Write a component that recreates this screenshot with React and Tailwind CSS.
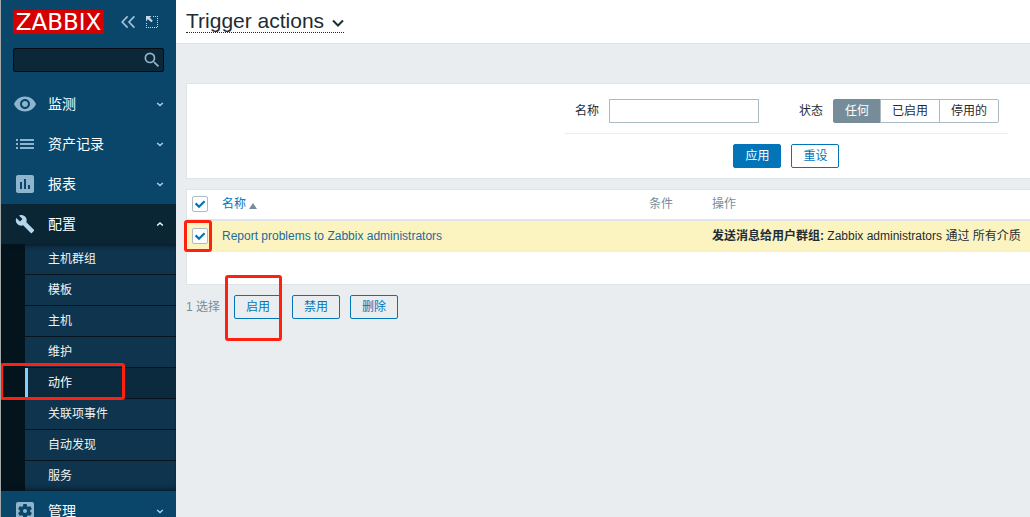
import { useState } from "react";
import {
  MdVisibility,
  MdList,
  MdAssessment,
  MdBuild,
  MdSettingsApplications,
  MdSearch,
} from "react-icons/md";

const TOP_SECTIONS = [
  { label: "监测", Icon: MdVisibility },
  { label: "资产记录", Icon: MdList },
  { label: "报表", Icon: MdAssessment },
];

const CONFIG_ITEMS = ["主机群组", "模板", "主机", "维护", "动作", "关联项事件", "自动发现", "服务"];

const STATUSES = ["任何", "已启用", "停用的"];

function Chevron({ up }) {
  return (
    <svg className="h-2 w-2" viewBox="0 0 8 8" fill="none" stroke="currentColor" strokeWidth="1.4">
      <path d={up ? "M1.2 5.5 4 2.9l2.8 2.6" : "M1.2 2.9 4 5.5l2.8-2.6"} />
    </svg>
  );
}

function Section({ label, Icon, open }) {
  return (
    <button
      type="button"
      aria-expanded={Boolean(open)}
      className={
        open
          ? "flex h-10 w-full items-center bg-[#0a2635] px-3 text-sm text-white"
          : "flex h-10 w-full items-center px-3 text-sm text-white"
      }
    >
      <span className="flex h-6 w-6 items-center justify-center">
        <Icon className={open ? "h-5 w-5 text-[#b5d7ee]" : "h-6 w-6 text-[#8fb5ce]"} />
      </span>
      <span className="ml-[11px]">{label}</span>
      <span className={open ? "ml-auto text-white" : "ml-auto text-[#b5d0e0]"}>
        <Chevron up={open} />
      </span>
    </button>
  );
}

function Highlight({ className }) {
  return (
    <span
      aria-hidden="true"
      className={"pointer-events-none absolute z-10 rounded-[3px] border-3 border-[#ff2010] " + className}
    />
  );
}

function Sidebar() {
  return (
    <aside className="w-44 shrink-0 overflow-hidden border-l border-[#a3a8ab] bg-[#0a466a]">
      <div className="flex items-center px-3 pt-[10px]">
        <a
          href="#home"
          className="flex h-6 w-[91px] items-center justify-center bg-[#d40000] font-['DejaVu_Sans',sans-serif] text-[23px] leading-6 text-white"
        >
          ZABBIX
        </a>
        <button type="button" aria-label="Collapse sidebar" className="ml-4 text-[#a5c5d9]">
          <svg className="h-4 w-4" viewBox="0 0 16 16" fill="none" stroke="currentColor" strokeWidth="1.6">
            <path d="M7.6 2.4 2.2 8l5.4 5.6M14.4 2.4 9 8l5.4 5.6" />
          </svg>
        </button>
        <button type="button" aria-label="Hide sidebar" className="ml-2 text-[#c3dae8]">
          <svg className="h-4 w-4" viewBox="0 0 16 16" fill="currentColor">
            <path d="M2 2h5.5L5.8 3.7l3 3-1.5 1.5-3.4-2.9L2 7.4z" />
            <path
              d="M9 2.5h5M13.5 4v10M2 13.5h11M2.5 9v4"
              fill="none"
              stroke="currentColor"
              strokeDasharray="1 1"
            />
          </svg>
        </button>
      </div>

      <div className="px-3 pt-[14px] pb-3">
        <label className="flex h-6 items-center rounded-xs border border-[#020d14] bg-[#0b2738] pr-px">
          <input type="search" aria-label="Search" className="min-w-0 flex-1 bg-transparent px-1 text-xs text-white outline-none" />
          <MdSearch className="h-5 w-5 text-[#8fb5ce]" />
        </label>
      </div>

      <nav>
        {TOP_SECTIONS.map((s) => (
          <Section key={s.label} {...s} />
        ))}
        <Section label="配置" Icon={MdBuild} open />
        <ul className="relative divide-y divide-[#05141d] bg-[#04141c] pl-6 text-xs text-[#edf4f8] before:pointer-events-none before:absolute before:inset-0 before:shadow-[inset_0_5px_5px_-4px_#04141c,inset_0_-5px_5px_-4px_#04141c]">
          {CONFIG_ITEMS.map((item) =>
            item === "动作" ? (
              <li key={item} className="relative">
                <a
                  href="#actions"
                  aria-current="page"
                  className="flex h-[30px] items-center border-l-3 border-[#87cefa] bg-[#0b2a3d] pl-5 text-white"
                >
                  {item}
                </a>
                <Highlight className="-top-[5px] -left-[25px] h-[37px] w-[125px]" />
              </li>
            ) : (
              <li key={item}>
                <a href="#config" className="flex h-[30px] items-center bg-[#0f344d] pl-[23px]">
                  {item}
                </a>
              </li>
            )
          )}
        </ul>
        <Section label="管理" Icon={MdSettingsApplications} />
      </nav>
    </aside>
  );
}

function Tick({ label, checked, onChange }) {
  return (
    <label className="relative block h-4 w-4">
      <input
        type="checkbox"
        aria-label={label}
        checked={checked}
        onChange={onChange}
        className="block h-4 w-4 appearance-none rounded-xs border border-[#acbbc2] bg-white"
      />
      {checked && (
        <svg
          className="pointer-events-none absolute inset-0 h-4 w-4 text-[#0275b8]"
          viewBox="0 0 16 16"
          fill="none"
          stroke="currentColor"
          strokeWidth="2.2"
        >
          <path d="M3.6 7.4 7 10.8l5.6-5.6" />
        </svg>
      )}
    </label>
  );
}

function OutlineButton({ children }) {
  return (
    <button type="button" className="h-6 rounded-xs border border-[#0275b8] px-[11px] text-[#0275b8]">
      {children}
    </button>
  );
}

function Filter() {
  const [status, setStatus] = useState("任何");
  return (
    <form
      onSubmit={(e) => e.preventDefault()}
      className="flex justify-end border-y border-l border-[#dfe4e7] bg-white pt-[15px] pr-[22px] pb-[10px]"
    >
      <div>
        <div className="flex items-center border-b border-[#ebeef0] pr-[9px] pb-[10px] pl-[10px]">
          <label htmlFor="filter-name">名称</label>
          <input id="filter-name" type="text" className="ml-[10px] h-6 w-[150px] border border-[#acbbc2] px-1" />
          <fieldset className="ml-10 flex items-center">
            <legend className="float-left mr-[10px] leading-6">状态</legend>
            <div className="flex">
              {STATUSES.map((s) => (
                <label
                  key={s}
                  className="relative -ml-px flex h-6 items-center border border-[#acbbc2] px-[11px] first:ml-0 first:rounded-l-xs last:rounded-r-xs has-checked:border-[#768d99] has-checked:bg-[#768d99] has-checked:text-white"
                >
                  <input
                    type="radio"
                    name="status"
                    className="sr-only"
                    checked={status === s}
                    onChange={() => setStatus(s)}
                  />
                  {s}
                </label>
              ))}
            </div>
          </fieldset>
        </div>
        <div className="flex justify-center gap-[10px] pt-[10px]">
          <button type="submit" className="h-6 rounded-xs border border-[#0275b8] bg-[#0275b8] px-[11px] text-white">
            应用
          </button>
          <OutlineButton>重设</OutlineButton>
        </div>
      </div>
    </form>
  );
}

function ActionTable() {
  const [checked, setChecked] = useState(true);
  const toggle = () => setChecked(!checked);
  return (
    <div className="mt-[10px] border-y border-l border-[#dfe4e7] bg-white pb-8">
      <table className="w-full table-fixed border-separate border-spacing-0 text-left">
        <colgroup>
          <col className="w-[30px]" />
          <col />
          <col className="w-[63px]" />
          <col className="w-[323px]" />
        </colgroup>
        <thead>
          <tr className="h-[31px] text-[#768d99] *:border-b-2 *:border-[#dfe4e7] *:pb-[2px] *:font-normal">
            <th className="pl-[5px]">
              <Tick label="全选" checked={checked} onChange={toggle} />
            </th>
            <th className="pl-[5px]">
              <a href="#sort" className="inline-flex items-center gap-[3px] text-[#0275b8]">
                名称
                <svg className="mt-1 h-[6px] w-2 text-[#768d99]" viewBox="0 0 8 6" fill="currentColor">
                  <path d="M4 0 8 6H0z" />
                </svg>
              </a>
            </th>
            <th className="pl-[5px]">条件</th>
            <th className="pl-[5px]">操作</th>
          </tr>
        </thead>
        <tbody>
          <tr className="h-[31px] bg-[#fcf4c0] *:border-b *:border-[#ebeef0]">
            <td className="relative pl-[5px]">
              <Tick label="Report problems to Zabbix administrators" checked={checked} onChange={toggle} />
              <Highlight className="-top-px -left-[3px] h-8 w-7" />
            </td>
            <td className="pl-[5px]">
              <a href="#action" className="text-[#1a6b9f]">
                Report problems to Zabbix administrators
              </a>
            </td>
            <td />
            <td className="pl-[5px] whitespace-nowrap">
              <b>发送消息给用户群组:</b> Zabbix administrators 通过 所有介质
            </td>
          </tr>
        </tbody>
      </table>
    </div>
  );
}

export default function App() {
  return (
    <div className="flex h-screen overflow-hidden bg-[#e9edf0] font-['Liberation_Sans','Noto_Sans_CJK_SC',sans-serif] text-xs text-[#1f2c33]">
      <Sidebar />
      <main className="min-w-0 flex-1">
        <header className="flex h-11 items-start border-b border-[#dfe4e7] bg-white pt-[9px] pl-[10px]">
          <h1>
            <button
              type="button"
              className="flex h-6 items-center border-b border-dotted border-[#1f2c33] text-[21px] leading-6"
            >
              Trigger actions
              <svg className="mt-1 ml-2 h-3 w-3" viewBox="0 0 12 12" fill="none" stroke="currentColor" strokeWidth="2">
                <path d="m1 3.5 5 5 5-5" />
              </svg>
            </button>
          </h1>
        </header>
        <div className="pt-[39px] pl-[10px]">
          <Filter />
          <ActionTable />
          <div className="mt-[10px] flex items-center gap-[10px]">
            <span className="mr-1 text-[#768d99]">1 选择</span>
            <div className="relative flex">
              <OutlineButton>启用</OutlineButton>
              <Highlight className="-top-5 -left-[9px] h-[66px] w-[57px]" />
            </div>
            <OutlineButton>禁用</OutlineButton>
            <OutlineButton>删除</OutlineButton>
          </div>
        </div>
      </main>
    </div>
  );
}
